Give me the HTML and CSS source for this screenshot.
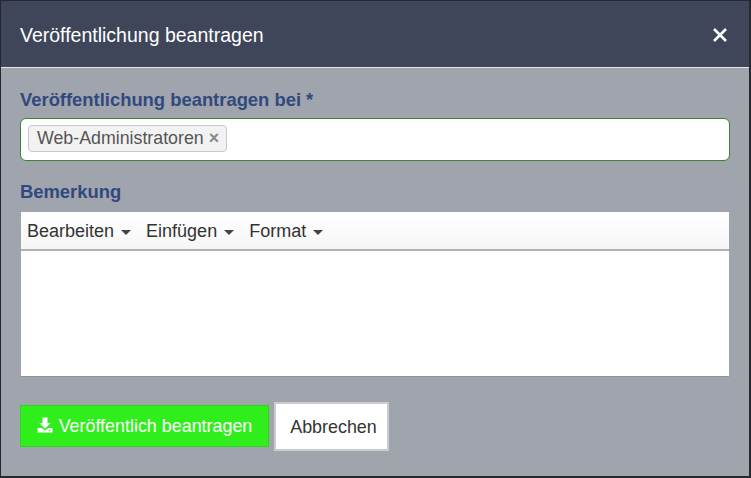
FILE: index.html
```html
<!DOCTYPE html>
<html lang="de">
<head>
<meta charset="utf-8">
<title>Veröffentlichung beantragen</title>
<link rel="stylesheet" href="styles.css">
</head>
<body>
<div class="modal">
  <header class="modal-head">
    <h1 class="modal-title">Veröffentlichung beantragen</h1>
    <svg class="close" viewBox="0 0 16 16" width="16" height="16" aria-label="Schließen"><path d="M2 2 L14 14 M14 2 L2 14" stroke="#fff" stroke-width="2.6" fill="none"/></svg>
  </header>
  <div class="modal-body">
    <label class="field-label">Veröffentlichung beantragen bei *</label>
    <div class="select-box">
      <span class="tag">Web-Administratoren <b class="tag-x">×</b></span>
    </div>
    <label class="field-label second">Bemerkung</label>
    <div class="editor">
      <div class="menubar">
        <span class="menu">Bearbeiten<i class="caret"></i></span>
        <span class="menu">Einfügen<i class="caret"></i></span>
        <span class="menu">Format<i class="caret"></i></span>
      </div>
      <div class="editor-area"></div>
    </div>
    <div class="actions">
      <button class="btn btn-green">
        <svg class="dl" viewBox="0 0 16 16" width="16" height="16"><path d="M5.5 0.5h5v5.5h3.2L8 11.8 2.3 6h3.2z M0.5 11h4l3.5 2.6L11.5 11h4v4.5H0.5z" fill="#fff"/><rect x="12.2" y="13" width="1.2" height="1.2" fill="#2fee1c"/></svg>
        <span>Veröffentlich beantragen</span>
      </button>
      <button class="btn btn-white"><span>Abbrechen</span></button>
    </div>
  </div>
</div>
</body>
</html>
```
FILE: styles.css
```css
* { box-sizing: border-box; }
html, body { margin: 0; height: 100%; }
body {
  background: #26282f;
  font-family: "Liberation Sans", Arial, sans-serif;
  overflow: hidden;
  padding: 1px 2px 2px 1px;
}
.modal { display: flex; flex-direction: column; height: 475px; }
.modal-head {
  height: 67px;
  background: #3f4659;
  border-bottom: 1px solid #e6e7ea;
  display: flex;
  align-items: center;
  justify-content: space-between;
  padding: 1px 21px 0 19px;
  flex: none;
}
.modal-title { margin: 0; font-size: 19.5px; font-weight: 400; color: #fff; line-height: 20px; }
.close { display: block; }
.modal-body {
  flex: 1;
  background: #a0a4ac;
  padding: 22px 19px 0;
}
.field-label {
  display: block;
  font-size: 18.4px;
  font-weight: 700;
  line-height: 20px;
  color: #30497f;
}
.second { margin-top: 21px; }
.select-box {
  margin-top: 8px;
  height: 43px;
  width: 710px;
  background: #fff;
  border: 1px solid #3f8136;
  border-radius: 6px;
  padding: 6px 7px;
  display: flex;
  align-items: flex-start;
}
.tag {
  height: 27px;
  background: #f2f2f2;
  border: 1px solid #c8c8c8;
  border-radius: 4px;
  padding: 0 7px 0 8px;
  font-size: 17.8px;
  line-height: 25px;
  color: #555;
  white-space: nowrap;
}
.tag-x { color: #8a8a8a; font-size: 17.8px; }
.editor { margin: 10px 1px 0; width: 708px; }
.menubar {
  height: 39px;
  background: linear-gradient(#fff, #f6f6f6);
  border-bottom: 2px solid #b0b0b0;
  display: flex;
  align-items: center;
  gap: 15px;
  padding: 1px 6px 0;
}
.menu { font-size: 18px; color: #333; display: flex; align-items: center; }
.caret {
  width: 0; height: 0; margin-left: 7px; margin-top: 2px;
  border-left: 5px solid transparent;
  border-right: 5px solid transparent;
  border-top: 5px solid #444;
}
.editor-area { height: 126px; background: #fff; border-bottom: 1px solid #8f9299; }
.actions { margin-top: 25px; display: flex; align-items: center; gap: 5px; }
.btn { font-family: inherit; font-size: 17.9px; display: flex; align-items: center; justify-content: center; padding: 1px 0 0; }
.btn-green {
  width: 249px; height: 42px;
  margin-bottom: 1px;
  background: #2fee1c;
  border: 1px solid #2bd81b;
  color: #fff;
  gap: 6px;
}
.dl { display: block; margin-top: -4px; }
.btn-white {
  width: 115px; height: 49px;
  background: #fff;
  border: 2px solid #cbccce;
  color: #333;
  padding-left: 4px;
}
```
